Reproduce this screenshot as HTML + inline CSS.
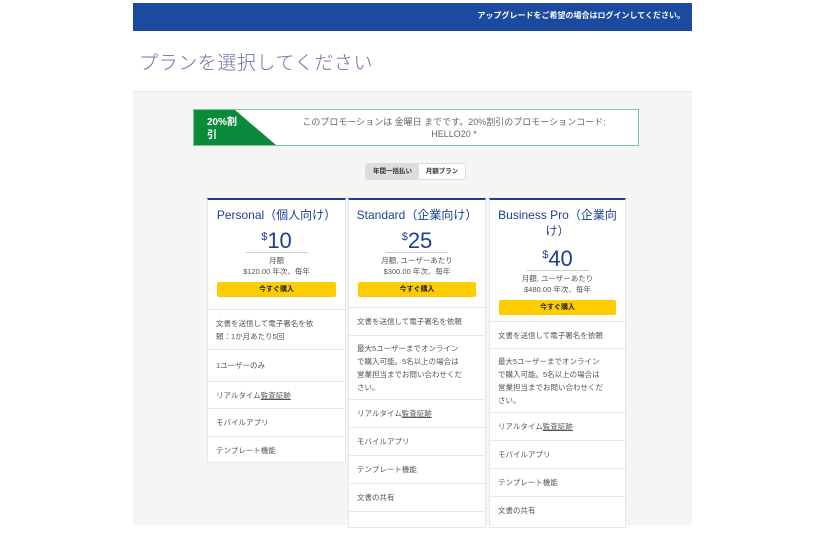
<!DOCTYPE html>
<html><head><meta charset="utf-8"><style>
*{margin:0;padding:0;box-sizing:border-box}
body{width:825px;height:525px;background:#fff;font-family:"Liberation Sans","Noto Sans CJK JP",sans-serif;position:relative;overflow:hidden}
.hdr{position:absolute;left:133px;top:3px;width:559px;height:28px;background:#1c4a9e;color:#fff;font-size:8px;font-weight:bold;text-align:right;padding-right:7px;line-height:25px}
.title{position:absolute;left:139px;top:48px;font-size:19px;color:#6572a8;font-weight:300;letter-spacing:0.6px}
.gray{position:absolute;left:133px;top:91px;width:559px;height:434px;background:#f5f5f5;border-top:1px solid #e6e6e6}
.promo{position:absolute;left:193px;top:109px;width:446px;height:37px;background:#fff;border:1px solid #7fc79a}
.tag{position:absolute;left:0;top:0;width:82px;height:35px;background:#0b8a3c;clip-path:polygon(0 0,50% 0,100% 100%,0 100%);color:#fff;font-weight:bold;font-size:10px;padding:6px 0 0 13px;line-height:13px}
.ptext{position:absolute;left:90px;top:6px;width:340px;text-align:center;font-size:9px;color:#666;line-height:12px}
.tog{position:absolute;left:365px;top:163px;width:101px;height:17px;border:1px solid #ddd;border-radius:3px;background:#fff;font-size:6.5px;font-weight:bold;color:#333;overflow:hidden}
.tog span{position:absolute;top:0;height:15px;line-height:15px;text-align:center}
.card{position:absolute;top:198px;background:#fff;border:1px solid #e3e8f0;border-top:2px solid #1c3f94}
.card h2{font-size:12px;font-weight:normal;color:#1c3f94;text-align:center;line-height:16px;padding-top:7px}
.price{text-align:center;color:#1c3f94;font-size:22px;line-height:22px;margin:3px auto 0;width:62px;border-bottom:1px solid #ccc;padding-bottom:0}
.price sup{font-size:11px;vertical-align:8px}
.sub{text-align:center;font-size:7.5px;color:#555;line-height:11px;margin-top:2px}
.btn{margin:5px 9px 0;height:15px;background:#ffcc00;border-radius:2px;font-size:7px;text-align:center;line-height:15px;color:#222;font-weight:bold}
.row{border-top:1px solid #e3e8f0;font-size:7.5px;color:#555;line-height:13px;padding:0 20px 0 8px;display:flex;align-items:center}
u{text-decoration:underline}
</style></head><body>
<div class="hdr">アップグレードをご希望の場合はログインしてください。</div>
<div class="title">プランを選択してください</div>
<div class="gray"></div>
<div class="promo"><div class="tag">20%割<br>引</div><div class="ptext">このプロモーションは 金曜日 までです。20%割引のプロモーションコード:<br>HELLO20 *</div></div>
<div class="tog"><span style="left:0;width:53px;background:#ddd">年間一括払い</span><span style="left:53px;width:46px">月額プラン</span></div>

<div class="card" style="left:207px;width:139px;height:265px">
<h2>Personal（個人向け）</h2>
<div class="price"><sup>$</sup>10</div>
<div class="sub">月額<br>$120.00 年次、毎年</div>
<div class="btn">今すぐ購入</div>
<div class="row" style="margin-top:12px;height:40px">文書を送信して電子署名を依頼：1か月あたり5回</div>
<div class="row" style="height:32px">1ユーザーのみ</div>
<div class="row" style="height:27px">リアルタイム<u>監査証跡</u></div>
<div class="row" style="height:28px">モバイルアプリ</div>
<div class="row" style="height:28px">テンプレート機能</div>
</div>

<div class="card" style="left:348px;width:138px;height:330px">
<h2>Standard（企業向け）</h2>
<div class="price"><sup>$</sup>25</div>
<div class="sub">月額, ユーザーあたり<br>$300.00 年次、毎年</div>
<div class="btn">今すぐ購入</div>
<div class="row" style="margin-top:10px;height:28px">文書を送信して電子署名を依頼</div>
<div class="row" style="height:64px">最大5ユーザーまでオンラインで購入可能。5名以上の場合は営業担当までお問い合わせください。</div>
<div class="row" style="height:28px">リアルタイム<u>監査証跡</u></div>
<div class="row" style="height:28px">モバイルアプリ</div>
<div class="row" style="height:28px">テンプレート機能</div>
<div class="row" style="height:28px">文書の共有</div>
<div class="row" style="height:28px"></div>
</div>

<div class="card" style="left:489px;width:137px;height:330px">
<h2>Business Pro（企業向<br>け）</h2>
<div class="price" style="margin-top:5px"><sup>$</sup>40</div>
<div class="sub">月額, ユーザーあたり<br>$480.00 年次、毎年</div>
<div class="btn">今すぐ購入</div>
<div class="row" style="margin-top:6px;height:27px">文書を送信して電子署名を依頼</div>
<div class="row" style="height:64px">最大5ユーザーまでオンラインで購入可能。5名以上の場合は営業担当までお問い合わせください。</div>
<div class="row" style="height:28px">リアルタイム<u>監査証跡</u></div>
<div class="row" style="height:28px">モバイルアプリ</div>
<div class="row" style="height:28px">テンプレート機能</div>
<div class="row" style="height:28px">文書の共有</div>
</div>
</body></html>
